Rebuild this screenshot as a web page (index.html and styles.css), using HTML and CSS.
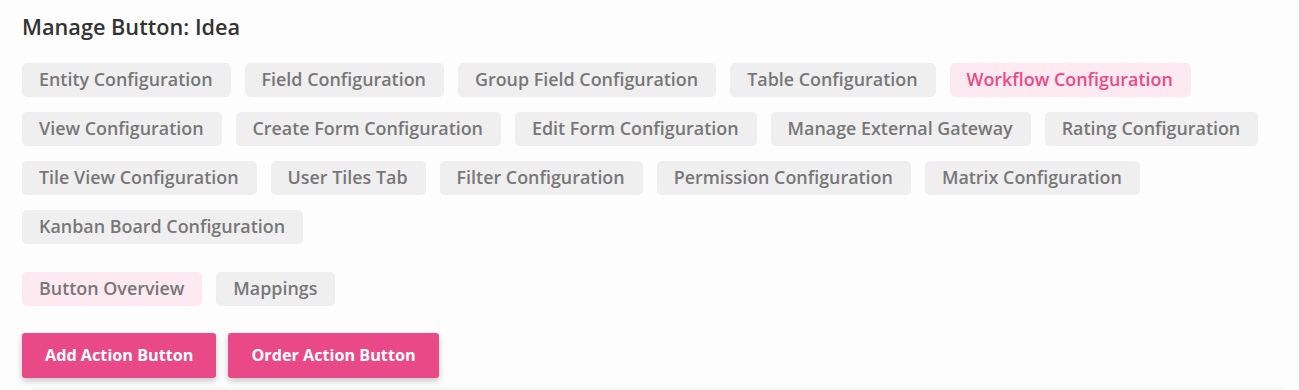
FILE: index.html
```html
<!DOCTYPE html>
<html lang="en">
<head>
<meta charset="utf-8">
<title>Manage Button: Idea</title>
<link rel="stylesheet" href="styles.css">
</head>
<body>
<main class="page">
  <h1 class="title">Manage Button: Idea</h1>
  <nav class="tabs">
    <a class="tab">Entity Configuration</a>
    <a class="tab">Field Configuration</a>
    <a class="tab">Group Field Configuration</a>
    <a class="tab">Table Configuration</a>
    <a class="tab tab-active">Workflow Configuration</a>
    <a class="tab">View Configuration</a>
    <a class="tab">Create Form Configuration</a>
    <a class="tab">Edit Form Configuration</a>
    <a class="tab">Manage External Gateway</a>
    <a class="tab">Rating Configuration</a>
    <a class="tab">Tile View Configuration</a>
    <a class="tab">User Tiles Tab</a>
    <a class="tab">Filter Configuration</a>
    <a class="tab">Permission Configuration</a>
    <a class="tab">Matrix Configuration</a>
    <a class="tab">Kanban Board Configuration</a>
  </nav>
  <nav class="tabs subtabs">
    <a class="tab tab-selected">Button Overview</a>
    <a class="tab">Mappings</a>
  </nav>
  <div class="actions">
    <button class="btn">Add Action Button</button>
    <button class="btn">Order Action Button</button>
  </div>
  <div class="card-edge"></div>
</main>
</body>
</html>
```
FILE: styles.css
```css
* { box-sizing: border-box; }
body {
  margin: 0;
  background: #fdfdfd;
  font-family: "Open Sans", "Noto Sans", sans-serif;
}
.page {
  padding: 12px 22px 0;
}
.title {
  margin: 0;
  font-size: 21.7px;
  line-height: 30px;
  font-weight: 600;
  color: #333;
}
.tabs {
  display: flex;
  flex-wrap: wrap;
  gap: 15px 14px;
  margin-top: 21px;
}
.subtabs {
  margin-top: 28px;
}
.tab {
  display: block;
  height: 34px;
  padding: 0 18px 2px 17px;
  line-height: 32px;
  font-size: 17.9px;
  font-weight: 600;
  color: #777;
  background: #efefef;
  border-radius: 5px;
  white-space: nowrap;
}
.tab-active {
  background: #fde9f0;
  color: #ec4a86;
}
.tab-selected {
  background: #fde9f0;
}
.actions {
  display: flex;
  gap: 12px;
  margin-top: 27px;
}
.btn {
  height: 45px;
  padding: 0 23px;
  border: 0;
  border-radius: 3px;
  background: #e94a87;
  color: #fff;
  font-family: inherit;
  font-size: 16.2px;
  font-weight: 700;
  line-height: 45px;
  box-shadow: 0 3px 6px rgba(0, 0, 0, 0.22);
}
.card-edge {
  height: 3px;
  margin: 9px -6px 0 10px;
  background: linear-gradient(to bottom, rgba(0, 0, 0, 0.012), rgba(0, 0, 0, 0.035));
}
```
